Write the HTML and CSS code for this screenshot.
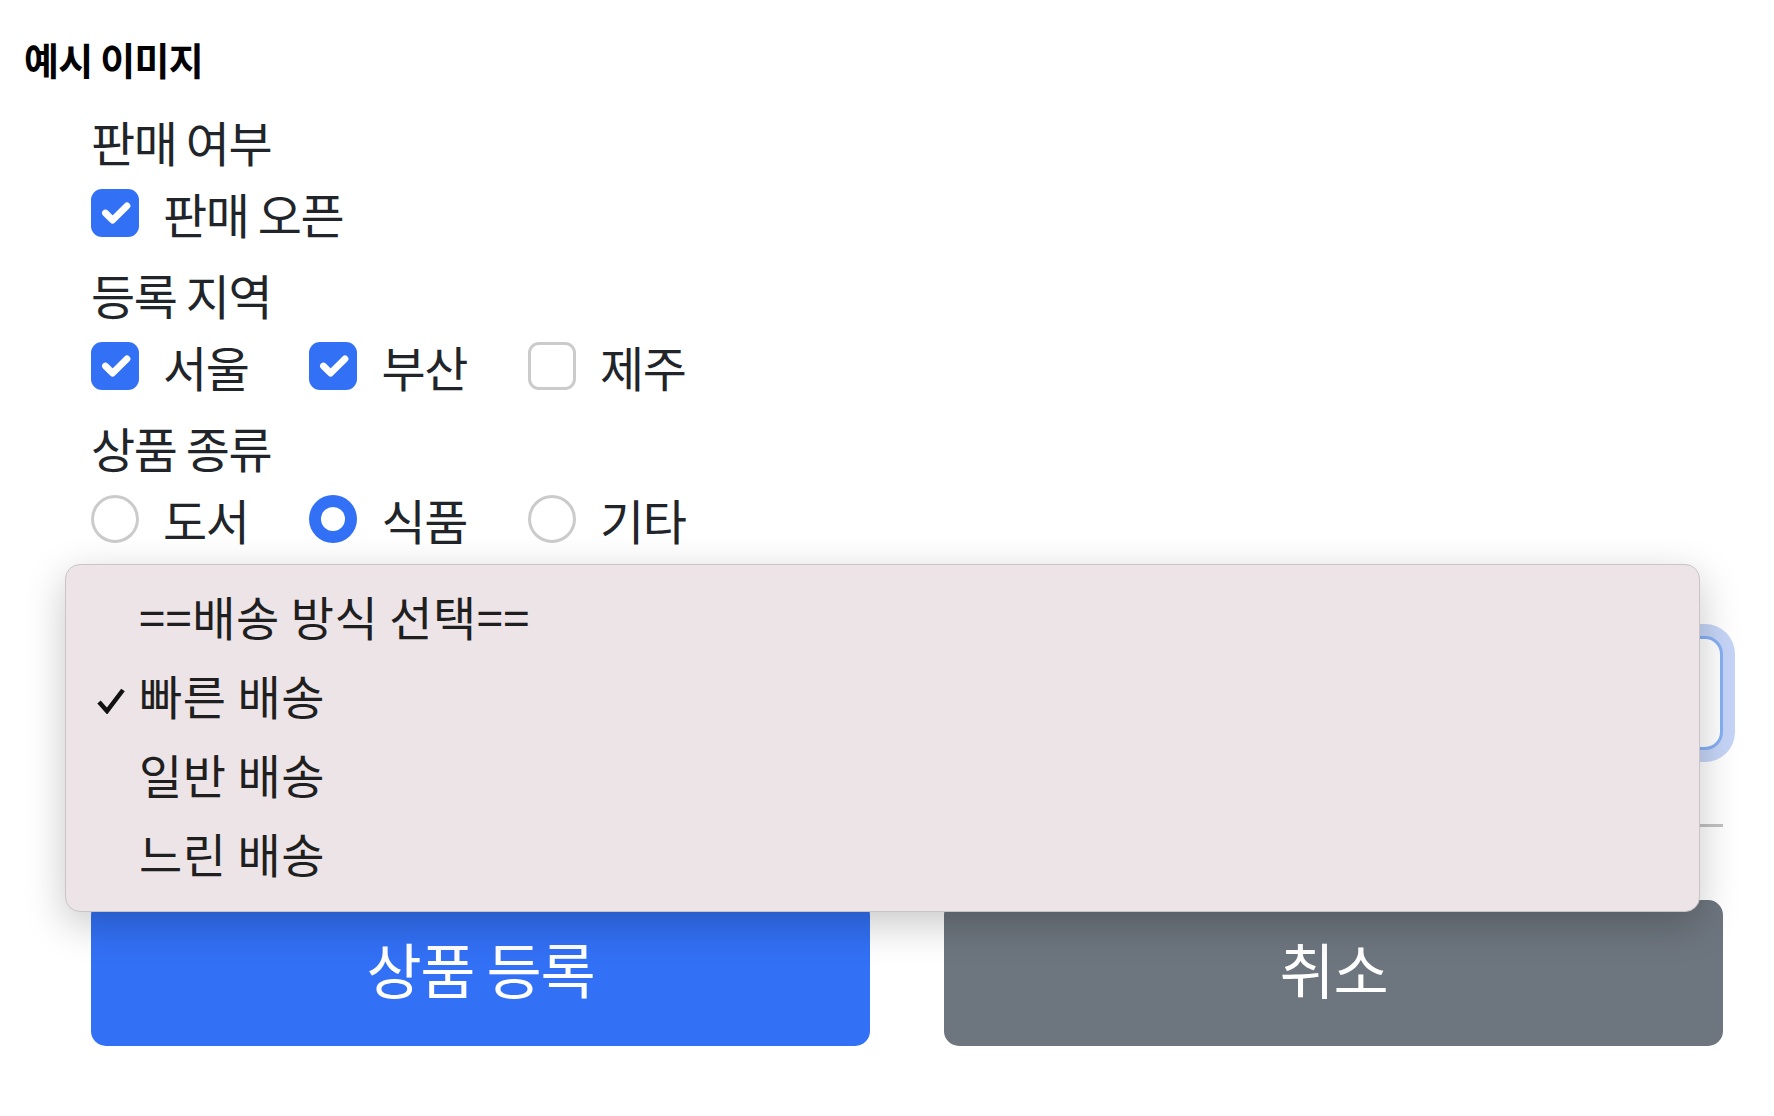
FILE: index.html
```html
<!DOCTYPE html>
<html>
<head>
    <meta charset="utf-8">
    <title>예시 이미지</title>
    <link rel="stylesheet" href="styles.css">
</head>
<body>
    <div class="page">
        <h4 class="title">예시 이미지</h4>
        <form class="form">
            <div class="label">판매 여부</div>
            <div class="checks">
                <label class="check"><span class="box on"><svg viewBox="0 0 20 20"><path d="m6 10 3 3 6-6"/></svg></span>판매 오픈</label>
            </div>

            <div class="label">등록 지역</div>
            <div class="checks">
                <label class="check"><span class="box on"><svg viewBox="0 0 20 20"><path d="m6 10 3 3 6-6"/></svg></span>서울</label>
                <label class="check"><span class="box on"><svg viewBox="0 0 20 20"><path d="m6 10 3 3 6-6"/></svg></span>부산</label>
                <label class="check"><span class="box"></span>제주</label>
            </div>

            <div class="label">상품 종류</div>
            <div class="checks">
                <label class="check"><span class="box radio"></span>도서</label>
                <label class="check"><span class="box radio on"></span>식품</label>
                <label class="check"><span class="box radio"></span>기타</label>
            </div>

            <select class="select">
                <option>빠른 배송</option>
            </select>

            <hr class="line">

            <div class="buttons">
                <button type="button" class="btn btn-primary">상품 등록</button>
                <button type="button" class="btn btn-secondary">취소</button>
            </div>
        </form>

        <!-- open native select popup -->
        <div class="menu">
            <div class="menu-item">==배송 방식 선택==</div>
            <div class="menu-item">
                <svg class="tick" viewBox="0 0 30 27"><path d="M3 15 L11 24 L27 3"/></svg>
                빠른 배송
            </div>
            <div class="menu-item">일반 배송</div>
            <div class="menu-item">느린 배송</div>
        </div>
    </div>
</body>
</html>
```

FILE: styles.css
```css
body {
    margin: 0;
    font-family: "Noto Sans CJK KR", "Noto Sans", sans-serif;
    color: #212529;
    background-color: #fff;
}
.page {
    position: relative;
    padding: 36px 24px 0;
}
.title {
    margin: 0;
    font-size: 38px;
    line-height: 46px;
    font-weight: 700;
    color: #000;
    letter-spacing: -0.02em;
}
.form {
    margin: 23px 27px 0 67px;
}
.label {
    font-size: 48px;
    line-height: 72px;
    letter-spacing: -0.03em;
}
.checks {
    display: flex;
    gap: 61px;
    height: 72px;
    margin-bottom: 9px;
}
.check {
    display: flex;
    align-items: flex-start;
    font-size: 48px;
    line-height: 72px;
    letter-spacing: -0.03em;
}
.box {
    box-sizing: border-box;
    width: 48px;
    height: 48px;
    margin-top: 12px;
    margin-right: 24px;
    border: 3px solid #cbcbcb;
    border-radius: 11px;
    display: flex;
    align-items: center;
    justify-content: center;
    background-color: #fff;
}
.box.on {
    border: none;
    background-color: #3270f5;
}
.box svg {
    width: 100%;
    height: 100%;
    fill: none;
    stroke: #fff;
    stroke-width: 2.8;
    stroke-linecap: round;
    stroke-linejoin: round;
}
.radio {
    border-radius: 50%;
}
.radio.on::after {
    content: "";
    width: 24px;
    height: 24px;
    border-radius: 50%;
    background-color: #fff;
}
.select {
    display: block;
    box-sizing: border-box;
    width: 100%;
    height: 114px;
    margin-top: 81px;
    padding: 0 36px;
    border: 3px solid #86b0f5;
    border-radius: 18px;
    box-shadow: 0 0 0 12px #c6d5f7;
    appearance: none;
    background-color: #fff;
    font-family: inherit;
    font-size: 48px;
    color: #212529;
    outline: none;
}
.line {
    margin: 74px 0 0;
    border: 0;
    border-top: 3px solid #c2c2c2;
}
.buttons {
    display: grid;
    grid-template-columns: 1fr 1fr;
    gap: 74px;
    margin-top: 73px;
}
.btn {
    height: 146px;
    padding: 0 0 12px;
    border: none;
    border-radius: 15px;
    color: #fff;
    font-family: inherit;
    font-size: 60px;
    letter-spacing: -0.02em;
    cursor: pointer;
}
.btn-primary {
    background-color: #3270f5;
}
.btn-secondary {
    background-color: #6d757e;
}
.menu {
    position: absolute;
    left: 65px;
    top: 564px;
    box-sizing: border-box;
    width: 1635px;
    height: 348px;
    padding: 11px 0 0 73px;
    background-color: #ece4e7;
    border: 1px solid #c9c4c6;
    border-radius: 15px;
    box-shadow: 0 12px 40px rgba(0, 0, 0, 0.22);
}
.menu-item {
    position: relative;
    height: 79px;
    line-height: 79px;
    font-size: 47px;
    letter-spacing: 0.5px;
    color: #1f1f1f;
}
.tick {
    position: absolute;
    left: -43px;
    top: 32px;
    width: 30px;
    height: 27px;
    fill: none;
    stroke: #111;
    stroke-width: 4.5;
    stroke-linejoin: miter;
}
```
